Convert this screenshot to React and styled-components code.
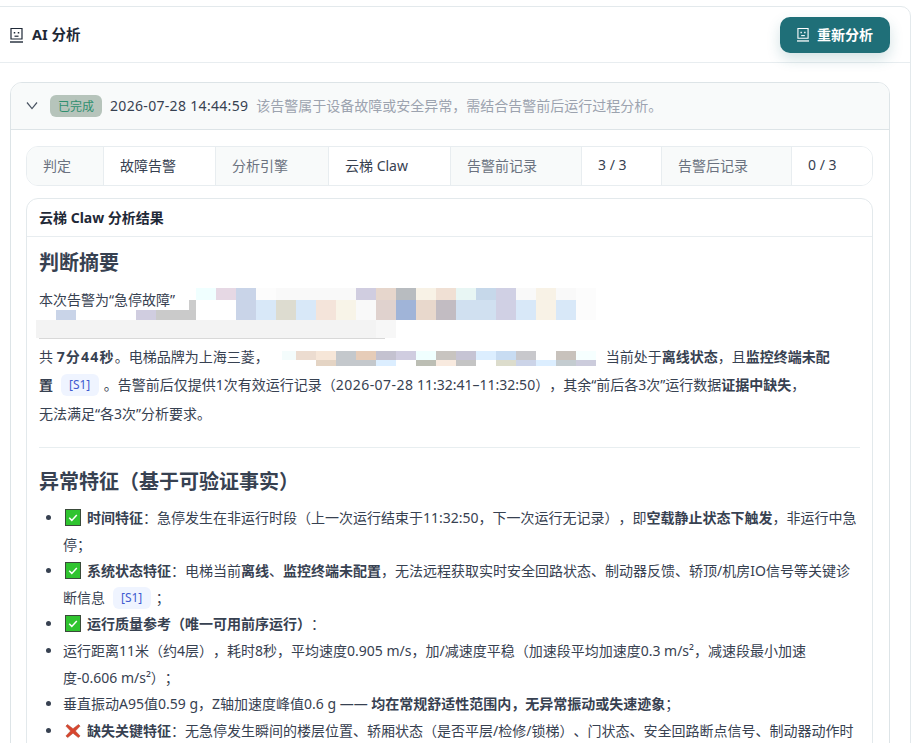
import React from "react";
import styled, { createGlobalStyle } from "styled-components";

const Global = createGlobalStyle`
  html, body { margin: 0; padding: 0; background: #fff; height: 743px; overflow: hidden; }
  body {
    font-family: "Noto Sans", "Noto Sans CJK SC", sans-serif;
    color: #374151;
    font-size: 14px;
    text-spacing-trim: space-all;
    font-feature-settings: "palt" 0;
  }
  * { box-sizing: border-box; }
`;

const Page = styled.div`
  padding: 6px 11px 0 0;
  margin-left: -10px;
`;
const Shell = styled.section`
  border: 1px solid #e3e9ec;
  border-radius: 10px;
  background: #fff;
`;
const TopBar = styled.header`
  height: 56px;
  display: flex;
  align-items: center;
  justify-content: space-between;
  padding: 0 20px 0 19px;
  border-bottom: 1px solid #e8edf0;
`;
const TopTitle = styled.h2`
  margin: 0;
  display: flex;
  align-items: center;
  gap: 9px;
  font-size: 14.5px;
  font-weight: 700;
  color: #1f2937;
`;
const TitleText = styled.span`
  padding-bottom: 2px;
`;
const ReButton = styled.button`
  width: 110px;
  height: 36px;
  border: 0;
  border-radius: 10px;
  background: #1f6f78;
  color: #fff;
  font: inherit;
  font-weight: 700;
  display: flex;
  align-items: center;
  justify-content: center;
  gap: 8px;
  box-shadow: 0 6px 14px rgba(31, 111, 120, 0.2);
`;
const Icon = styled.svg`
  display: block;
  flex: none;
`;
const Body = styled.div`
  padding: 19px 20px 0 19px;
`;
const Record = styled.article`
  border: 1px solid #dde4e7;
  border-radius: 12px;
  background: #fff;
  overflow: hidden;
`;
const RecordHead = styled.div`
  height: 47px;
  background: #f8fafa;
  border-bottom: 1px solid #dde4e7;
  display: flex;
  align-items: center;
  padding: 0 14px;
  gap: 8px;
`;
const StatusTag = styled.span`
  width: 52px;
  height: 22px;
  border-radius: 6px;
  background: #b6c4bb;
  color: #2f8f6f;
  font-size: 12px;
  display: flex;
  align-items: center;
  justify-content: center;
  margin-left: 3px;
  padding-bottom: 1px;
`;
const Stamp = styled.span`
  color: #374151;
  font-size: 14px;
  letter-spacing: 0.32px;
  padding-bottom: 2px;
`;
const Hint = styled.span`
  color: #9ca3af;
  font-size: 14px;
  padding-bottom: 2px;
`;
const RecordBody = styled.div`
  padding: 16px 16px 0 15px;
  display: flex;
  flex-direction: column;
  gap: 12px;
`;
const Facts = styled.div`
  display: grid;
  grid-template-columns: 76px 112px 113px 122px 131px 80px 130px 1fr;
  height: 40px;
  border: 1px solid #e8edf0;
  border-radius: 12px;
  overflow: hidden;
`;
const FactCell = styled.div`
  display: flex;
  align-items: center;
  padding: 0 0 3px 16px;
  background: ${(p) => (p.$label ? "#f8fafa" : "#fff")};
  color: ${(p) => (p.$label ? "#6b7280" : "#374151")};
  border-left: ${(p) => (p.$first ? "0" : "1px solid #e8edf0")};
  font-size: 14px;
`;
const ResultCard = styled.div`
  border: 1px solid #e3e9ec;
  border-radius: 12px 12px 0 0;
  background: #fff;
`;
const ResultHead = styled.div`
  height: 38px;
  display: flex;
  align-items: center;
  padding: 0 12px 2px;
  border-bottom: 1px solid #e8edf0;
  font-size: 14px;
  font-weight: 700;
  color: #1f2937;
`;
const Markdown = styled.div`
  padding: 12px 12px 60px;
`;
const Heading = styled.h3`
  margin: 0;
  font-size: 20px;
  line-height: 28px;
  font-weight: 700;
  color: #374151;
`;
const Para = styled.p`
  position: relative;
  margin: 9px 0 0;
  line-height: 28.4px;
  font-size: 14px;
`;
const Mosaic = styled.svg`
  position: absolute;
  left: -3px;
  top: 1px;
  pointer-events: none;
`;
const Gap = styled.span`
  display: inline-block;
  width: ${(p) => p.$w}px;
`;
const Strong = styled.strong`
  font-weight: 700;
`;
const Duration = styled.strong`
  font-weight: 700;
  letter-spacing: 1.2px;
`;
const DateText = styled.span`
  letter-spacing: 0.45px;
`;
const Cite = styled.span`
  display: inline-flex;
  align-items: center;
  justify-content: center;
  width: 38px;
  height: 22px;
  margin: 0 1.5px 0 4px;
  border-radius: 6px;
  background: #eff4ff;
  color: #3f5bd0;
  font-size: 12px;
  vertical-align: 1px;
  line-height: 22px;
`;
const Rule = styled.hr`
  border: 0;
  border-top: 1px solid #e8eef0;
  margin: 19px 0 20px;
`;
const Bullets = styled.ul`
  margin: 9px 0 0;
  padding-left: 24px;
  list-style: disc;
`;
const Item = styled.li`
  line-height: 26.6px;
  font-size: 14px;
`;
const Emoji = styled.svg`
  display: inline-block;
  vertical-align: -3px;
  margin: 0 6.5px 0 1.5px;
`;

const FaceIcon = ({ color, width = 13, height = 16 }) => (
  <Icon width={width} height={height} viewBox="1.5 0 13 16" fill="none" stroke={color} strokeWidth="1.2">
    <path d="M2.5 1.5h11v10.5h-11z" />
    <path d="M1.5 15h13" strokeWidth="1.4" />
    <path d="M6 5v1.6M10 5v1.6" strokeWidth="1.5" />
    <path d="M6 9.2h4" />
  </Icon>
);

const Chevron = () => (
  <Icon width="14" height="14" viewBox="0 0 14 14" fill="none" stroke="#4b5563" strokeWidth="1.2">
    <path d="M2 3.5L7 9.6l5-6.1" />
  </Icon>
);

const Check = () => (
  <Emoji width="16" height="17" viewBox="0 0 16 17">
    <rect x="0.5" y="0.5" width="15" height="16" fill="#2fc42f" stroke="#3a4a3a" />
    <path d="M4.2 8.8l2.6 2.6 5-5.4" fill="none" stroke="#fff" strokeWidth="1.5" />
  </Emoji>
);

const Cross = () => (
  <Emoji width="16" height="17" viewBox="0 0 16 17">
    <path d="M2.5 2.5l5.5 4.2 5.5-4.2 1.6 1.6-4.7 4.9 4.7 5-1.8 1.6-5.3-4.4-5.3 4.4-1.8-1.6 4.7-5-4.7-4.9z" fill="#d8452e" stroke="#a8442f" strokeWidth="0.5" />
  </Emoji>
);

const mosaicRows = [
  { x: 196, y: 1, h: 12, w: 20, c: ["#f0ffff", "#e6d8e4", "#c9d4e8", "#fcfcfc", "#f9f9f9", "#f9f9f9", "#f9f9f9", "#f9f9f9", "#d0cde0", "#e6d6cc", "#b8bcc0", "#f8f2e6", "#f0e0d4", "#e8f6f4", "#c6d8ea", "#d0d0e4", "#f9f9f9", "#f8f2e6", "#f9f9f9", "#fcfcfc"] },
  { x: 236, y: 13, h: 20, w: 20, c: ["#c9d4e8", "#d8e8f8", "#dddcd0", "#d8e8f8", "#f4e4da", "#f8f4e8", "#f9f9f9", "#e0d2ce", "#a0b4d8", "#e8d8cc", "#c2bcc2", "#d0e0f0", "#d0e0f0", "#d0d0e4", "#d8e8f8", "#f8f2e6", "#d8e8f8", "#fcfcfc"] },
  { x: 296, y: 64, h: 9, w: 20, c: ["#ecdcd0", "#f6e6d8", "#c4c8cc", "#e6ccb8", "#c4c2d0", "#d0cde0", "#f0ffff", "#c8c4c0", "#c6c4d4", "#dceeff", "#c8dcf2", "#c8c8cc", "#ffffff", "#c8c2bc", "#f6ffff"] },
  { x: 316, y: 73, h: 6, w: 20, c: ["#e4d4c4", "#c4c8cc", "#c4c8cc", "#dceeff", "#ffffff", "#bcbeb4", "#f8eadf", "#c4c4c4", "#ffffff", "#dcdccc", "#ccd4e8", "#dceeff", "#c4ccd0", "#ccccdc"] },
];
const mosaicExtras = [
  { x: 56, y: 23, w: 20, h: 10, c: "#c9d4e8" },
  { x: 136, y: 23, w: 20, h: 10, c: "#d0cde0" },
  { x: 156, y: 23, w: 40, h: 10, c: "#cacaca" },
  { x: 189, y: 13, w: 7, h: 10, c: "#cccccc" },
  { x: 36, y: 33, w: 340, h: 18, c: "#f3f3f3" },
  { x: 376, y: 33, w: 20, h: 18, c: "#f7f7f7" },
  { x: 39, y: 51, w: 346, h: 1, c: "#d8d8d8" },
  { x: 282, y: 64, w: 14, h: 9, c: "#f4fcfc" },
];

const RedactionMosaic = () => (
  <Mosaic width="620" height="82" viewBox="36 0 620 82">
    {mosaicRows.map((r) =>
      r.c.map((c, i) => <rect key={`${r.y}-${i}`} x={r.x + r.w * i} y={r.y} width={r.w} height={r.h} fill={c} />)
    )}
    {mosaicExtras.map((e, i) => <rect key={i} x={e.x} y={e.y} width={e.w} height={e.h} fill={e.c} />)}
  </Mosaic>
);

const facts = [
  ["判定", "故障告警"],
  ["分析引擎", "云梯 Claw"],
  ["告警前记录", "3 / 3"],
  ["告警后记录", "0 / 3"],
];

export default function App() {
  return (
    <>
      <Global />
      <Page>
        <Shell>
          <TopBar>
            <TopTitle>
              <FaceIcon color="#1f2937" />
              <TitleText>AI 分析</TitleText>
            </TopTitle>
            <ReButton>
              <FaceIcon color="#ffffff" width={12} height={15} />
              <TitleText>重新分析</TitleText>
            </ReButton>
          </TopBar>
          <Body>
            <Record>
              <RecordHead>
                <Chevron />
                <StatusTag>已完成</StatusTag>
                <Stamp>2026-07-28 14:44:59</Stamp>
                <Hint>该告警属于设备故障或安全异常，需结合告警前后运行过程分析。</Hint>
              </RecordHead>
              <RecordBody>
                <Facts>
                  {facts.map(([k, v], i) => (
                    <React.Fragment key={k}>
                      <FactCell $label $first={i === 0}>{k}</FactCell>
                      <FactCell>{v}</FactCell>
                    </React.Fragment>
                  ))}
                </Facts>
                <ResultCard>
                  <ResultHead>云梯 Claw 分析结果</ResultHead>
                  <Markdown>
                    <Heading>判断摘要</Heading>
                    <Para>
                      本次告警为“急停故障”
                      <br />
                      &nbsp;
                      <br />
                      共 <Duration>7分44秒</Duration>。电梯品牌为上海三菱，<Gap $w={337} />当前处于<Strong>离线状态</Strong>，且<Strong>监控终端未配</Strong>
                      <br />
                      <Strong>置</Strong>{" "}<Cite>[S1]</Cite>{" "}。告警前后仅提供1次有效运行记录（<DateText>2026-07-28</DateText> 11:32:41–11:32:50），其余“前后各3次”运行数据<Strong>证据中缺失</Strong>，
                      <br />
                      无法满足“各3次”分析要求。
                      <RedactionMosaic />
                    </Para>
                    <Rule />
                    <Heading>异常特征（基于可验证事实）</Heading>
                    <Bullets>
                      <Item><Check /><Strong>时间特征</Strong>：急停发生在非运行时段（上一次运行结束于11:32:50，下一次运行无记录），即<Strong>空载静止状态下触发</Strong>，非运行中急<br />停；</Item>
                      <Item><Check /><Strong>系统状态特征</Strong>：电梯当前<Strong>离线</Strong>、<Strong>监控终端未配置</Strong>，无法远程获取实时安全回路状态、制动器反馈、轿顶/机房IO信号等关键诊<br />断信息 <Cite>[S1]</Cite> ；</Item>
                      <Item><Check /><Strong>运行质量参考（唯一可用前序运行）</Strong>：</Item>
                      <Item>运行距离11米（约4层），耗时8秒，平均速度0.905 m/s，加/减速度平稳（加速段平均加速度0.3 m/s²，减速段最小加速<br />度-0.606 m/s²）；</Item>
                      <Item>垂直振动A95值0.59 g，Z轴加速度峰值0.6 g —— <Strong>均在常规舒适性范围内，无异常振动或失速迹象</Strong>；</Item>
                      <Item><Cross /><Strong>缺失关键特征</Strong>：无急停发生瞬间的楼层位置、轿厢状态（是否平层/检修/锁梯）、门状态、安全回路断点信号、制动器动作时<br />序等数据。</Item>
                    </Bullets>
                  </Markdown>
                </ResultCard>
              </RecordBody>
            </Record>
          </Body>
        </Shell>
      </Page>
    </>
  );
}
